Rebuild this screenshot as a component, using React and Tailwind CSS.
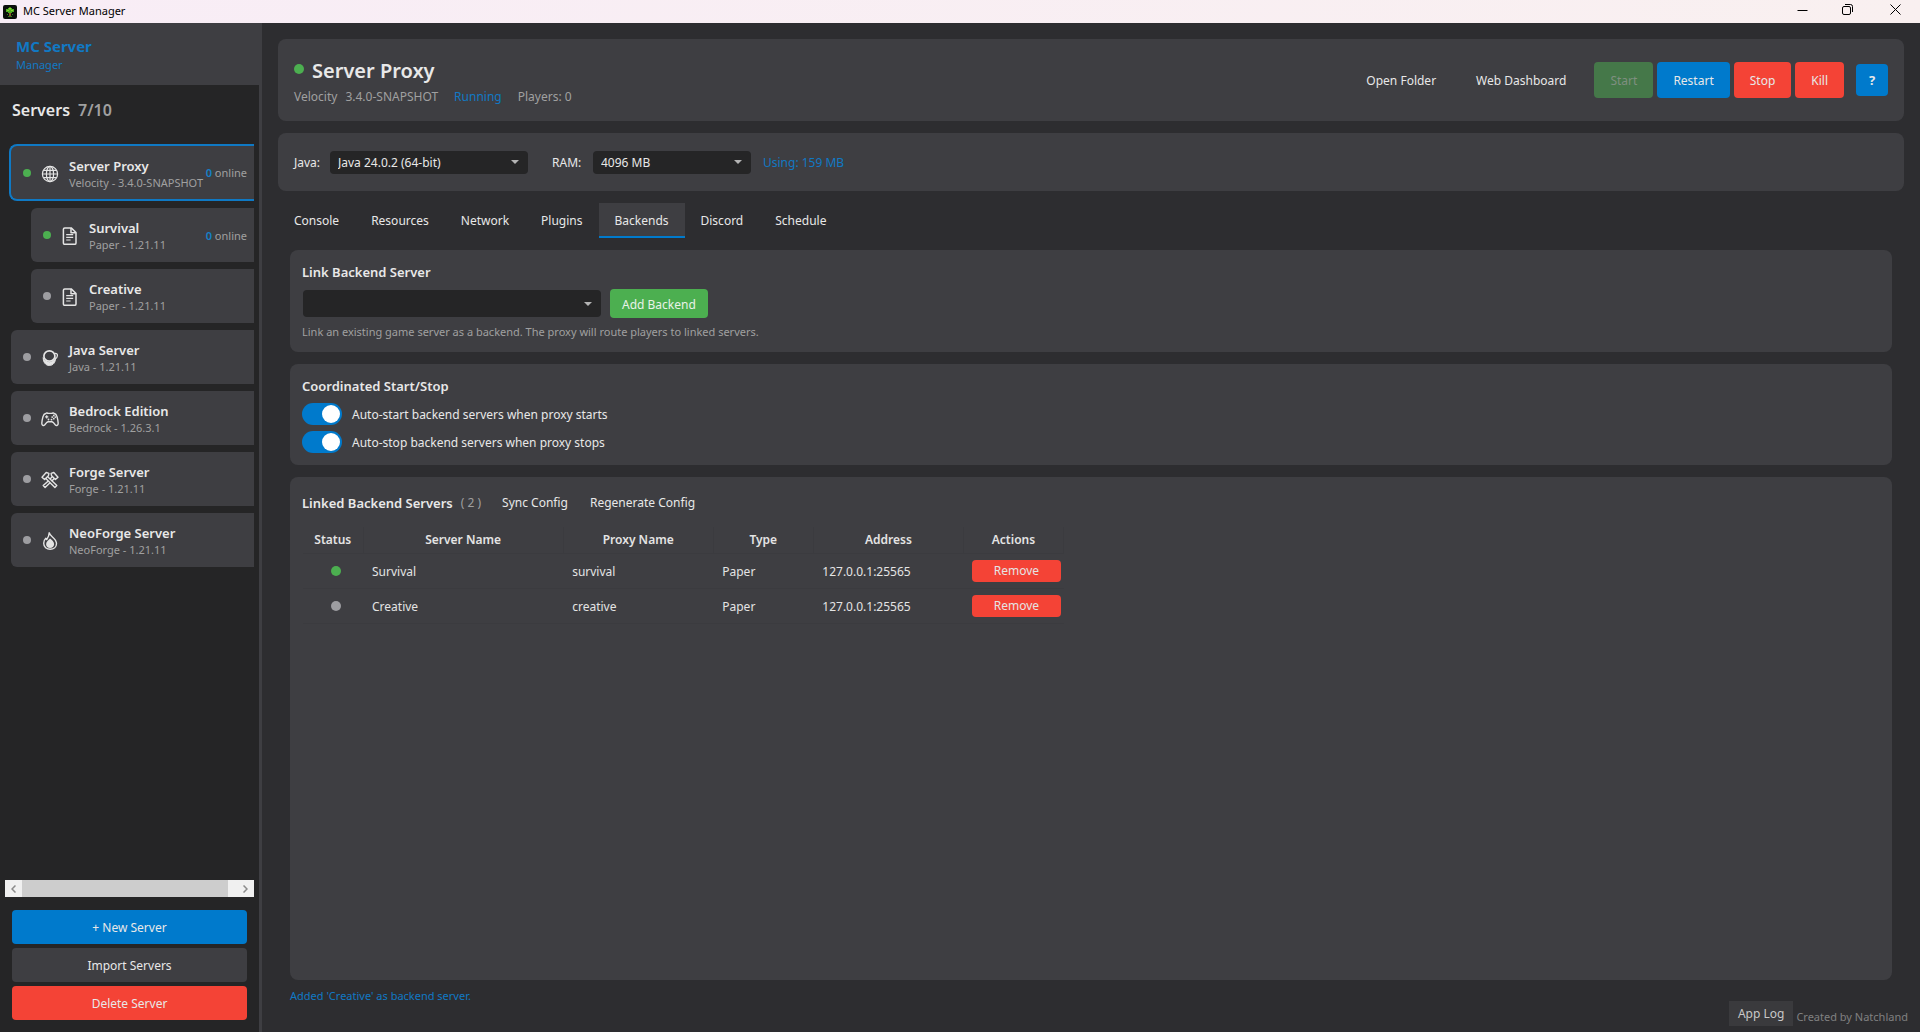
import { useState } from "react";

const GlobeIcon = () => (
  <svg viewBox="0 0 18 18" className="size-[18px] shrink-0" fill="none" stroke="currentColor" strokeWidth="1.2">
    <circle cx="9" cy="9" r="7.6" />
    <ellipse cx="9" cy="9" rx="3.6" ry="7.6" />
    <path d="M9 1.4v15.2M1.4 9h15.2M2.4 5.3h13.2M2.4 12.7h13.2" />
  </svg>
);

const PageIcon = () => (
  <svg viewBox="0 0 18 18" className="size-[18px] shrink-0" fill="none" stroke="currentColor" strokeWidth="1.5" strokeLinejoin="round">
    <path d="M3.8.9h6.4l4.8 4.6v10.4a1.4 1.4 0 0 1-1.4 1.4H3.8a1.4 1.4 0 0 1-1.4-1.4V2.3A1.4 1.4 0 0 1 3.8.9z" />
    <path d="M10 1v4.7h4.8" />
    <path d="M5.2 7.6h7M5.2 10.3h7M5.2 13h4.4" strokeWidth="1.2" />
  </svg>
);

const CupIcon = () => (
  <svg viewBox="0 0 18 18" className="size-[18px] shrink-0" fill="none" stroke="currentColor">
    <path d="M2.2 8.6c0 4.900 2.600 7.900 6.200 7.900s6.200-3 6.200-7.900c-1 2.900-3.200 4.600-6.200 4.600S3.200 11.500 2.200 8.600z" fill="currentColor" strokeWidth="1" />
    <ellipse cx="8.400" cy="7" rx="5.500" ry="5.200" strokeWidth="1.700" />
    <path d="M13.6 4.600c1.800-.6 3 .3 2.800 2.200-.2 1.700-1.200 3-2.600 3.600" strokeWidth="1.300" />
  </svg>
);

const GamepadIcon = () => (
  <svg viewBox="0 0 18 18" className="size-[18px] shrink-0" fill="none" stroke="currentColor" strokeWidth="1.4" strokeLinejoin="round">
    <path d="M5.200 3.200c1-.5 1.600.2 2.200.2h3.200c.6 0 1.200-.7 2.200-.2 1.900.5 2.700 1.300 3.200 3.400.7 2.500 1.200 4.700 1.200 6.700 0 2.300-1.700 2.900-3 1.500l-2-2.400c-.4-.4-.8-.6-1.400-.6H7.200c-.6 0-1 .2-1.400.6l-2 2.400c-1.300 1.400-3 .8-3-1.500 0-2 .5-4.200 1.200-6.700.5-2.100 1.300-2.900 3.200-3.400z" />
    <path d="M5.700 5.300v3.200M4.100 6.900h3.200" strokeWidth="1.200" />
    <g fill="currentColor" stroke="none">
      <circle cx="12.800" cy="5.500" r=".9" />
      <circle cx="11.200" cy="7.100" r=".9" />
      <circle cx="14.300" cy="7.100" r=".9" />
      <circle cx="12.800" cy="8.700" r=".9" />
      <circle cx="7.500" cy="9.500" r=".9" />
      <circle cx="10.500" cy="9.700" r=".9" />
    </g>
  </svg>
);

const HammersIcon = () => (
  <svg viewBox="0 0 18 18" className="size-[18px] shrink-0" fill="none" stroke="currentColor" strokeWidth="1.400" strokeLinejoin="round">
    <path d="M1 6.200 5.200 1.500 7.900 2.300 7.400 4.800 3.600 8.600z" />
    <path d="M17 6.200 12.800 1.500 10.100 2.300 10.600 4.800 14.400 8.600z" />
    <path d="M6.700 5.800 15.800 14.600 13.900 16.500 4.800 7.600" />
    <path d="M11.300 5.800 9 8M7.300 9.900 2.200 14.600l1.900 1.900L9 11.800M10.700 10.200l2.500-2.600" />
  </svg>
);

const FlameIcon = () => (
  <svg viewBox="0 0 18 18" className="size-[18px] shrink-0" fill="none" stroke="currentColor" strokeWidth="1.400" strokeLinejoin="round">
    <path d="M8.200.8c.6 1.800 1.600 2.700 3 3.900 2.300 2 4.300 3.900 4.300 6.900 0 3.500-2.800 5.700-6.300 5.700s-6.500-2.300-6.500-6c0-2.200.9-3.900 2.100-5l.9 1.300C6.900 5.700 8.300 3.500 8.200.8z" />
    <path d="M9.100 6.500c2 1.700 4 3.400 4 5.700s-1.700 3.800-4 3.800-4-1.500-4-3.800 2.400-4 4-5.700z" fill="currentColor" stroke="none" />
  </svg>
);

const AppLogo = () => (
  <svg viewBox="0 0 14 14" className="size-[14px]">
    <rect width="14" height="14" rx="2" fill="#0b0f0b" />
    <path d="M5 3h4v1h2v3H9v1H5V7H3V4h2z" fill="#4fae22" />
    <path d="M6 2.500h2v2H6zM4 5h2v1H4zM8 5h2v1H8z" fill="#8ad62f" />
    <path d="M6 8h2v3H6z" fill="#8a5a2b" />
    <path d="M4 9h1v1H4zM9 9h1v1H9zM5 11h4v1H5z" fill="#3c7a1c" />
  </svg>
);

const servers = [
  { name: "Server Proxy", detail: "Velocity - 3.4.0-SNAPSHOT", Icon: GlobeIcon, running: true, selected: true },
  { name: "Survival", detail: "Paper - 1.21.11", Icon: PageIcon, running: true, child: true },
  { name: "Creative", detail: "Paper - 1.21.11", Icon: PageIcon, child: true },
  { name: "Java Server", detail: "Java - 1.21.11", Icon: CupIcon },
  { name: "Bedrock Edition", detail: "Bedrock - 1.26.3.1", Icon: GamepadIcon },
  { name: "Forge Server", detail: "Forge - 1.21.11", Icon: HammersIcon },
  { name: "NeoForge Server", detail: "NeoForge - 1.21.11", Icon: FlameIcon },
];

const backends = [
  { name: "Survival", proxy: "survival", type: "Paper", address: "127.0.0.1:25565", running: true },
  { name: "Creative", proxy: "creative", type: "Paper", address: "127.0.0.1:25565", running: false },
];

const columns = [
  ["Status", "w-[60px]"],
  ["Server Name", "w-[200px]"],
  ["Proxy Name", "w-[150px]"],
  ["Type", "w-[100px]"],
  ["Address", "w-[150px]"],
  ["Actions", "w-[100px]"],
];

const tabs = ["Console", "Resources", "Network", "Plugins", "Backends", "Discord", "Schedule"];

function TitleBar() {
  return (
    <header className="flex h-[23px] shrink-0 items-center bg-linear-to-r from-[#f8edf6] to-[#f9f0f0] pl-[3px] text-black">
      <AppLogo />
      <span className="ml-1.5 text-[11px]">MC Server Manager</span>
      <div className="ml-auto flex h-full">
        <button aria-label="Minimize" className="grid w-[45px] place-items-center pb-1">
          <svg viewBox="0 0 11 11" className="size-[11px]" stroke="currentColor"><path d="M.5 6.500h10" /></svg>
        </button>
        <button aria-label="Restore" className="grid w-[45px] place-items-center pb-1">
          <svg viewBox="0 0 11 11" className="size-[11px]" fill="none" stroke="currentColor">
            <rect x=".5" y="2.500" width="8" height="8" rx="1.500" />
            <path d="M3 .5h5.500a2 2 0 0 1 2 2V8" />
          </svg>
        </button>
        <button aria-label="Close" className="grid w-[50px] place-items-center pb-1">
          <svg viewBox="0 0 11 11" className="size-[11px]" stroke="currentColor"><path d="m.5.5 10 10M10.500.5l-10 10" /></svg>
        </button>
      </div>
    </header>
  );
}

function Dot({ running, size }) {
  return <span className={`${size} shrink-0 rounded-full ${running ? "bg-[#4caf50]" : "bg-[#9d9da1]"}`} />;
}

function ServerItem({ name, detail, Icon, running, selected, child }) {
  const frame = selected
    ? "h-[57px] rounded-l-lg border-2 border-r-0 border-[#0f79c4]"
    : child
      ? "ml-[22px] h-[54px] rounded-l-md"
      : "ml-0.5 h-[54px] rounded-l-md";
  return (
    <li>
      <button className={`${frame} flex w-full items-center bg-[#3e3e42] pr-[7px] pl-3 text-left ${child ? "max-w-[223px]" : ""}`}>
        <Dot running={running} size="size-2" />
        <span className="mt-0.5 ml-2.5 text-[#e4e4e4]"><Icon /></span>
        <span className={`ml-2.5 flex flex-col whitespace-nowrap ${selected ? "pt-1" : "pt-0.5"}`}>
          <span className="text-[13px] leading-[17px] font-semibold text-[#e8e8e8]">{name}</span>
          <span className="text-[11px] leading-4 text-[#a0a0a0]">{detail}</span>
        </span>
        {running && (
          <span className="ml-auto pt-0.5 text-[11px] whitespace-nowrap text-[#a0a0a0]">
            <b className="font-semibold text-[#1480ca]">0</b> online
          </span>
        )}
      </button>
    </li>
  );
}

function Sidebar() {
  return (
    <aside className="flex w-[262px] shrink-0 flex-col border-r-3 border-[#3e3e42] bg-[#252526]">
      <div className="flex h-[62px] flex-col justify-center bg-[#3e3e42] px-4 pt-0.5 text-[#1179c4]">
        <h1 className="text-[15px] leading-5 font-bold">MC Server</h1>
        <p className="text-[11px] leading-[18px]">Manager</p>
      </div>
      <h2 className="flex h-[58px] items-center gap-2 pb-2 pl-3 text-[16px] font-semibold text-[#e8e8e8]">
        Servers <span className="text-[#a0a0a0]">7/10</span>
      </h2>
      <ul className="mt-px mr-[5px] ml-[9px] flex flex-1 flex-col gap-[7px] overflow-hidden">
        {servers.map((s) => <ServerItem key={s.name} {...s} />)}
      </ul>
      <div className="mr-[5px] ml-[5px] flex h-[17px] bg-[#f0f0f0] text-[#8a8a8a]">
        <button aria-label="Scroll left" className="grid w-[17px] place-items-center">
          <svg viewBox="0 0 5 8" className="h-2 w-[5px]" fill="none" stroke="currentColor" strokeWidth="1.500"><path d="M4.500.5 1 4l3.500 3.500" /></svg>
        </button>
        <div className="flex-1 bg-[#cdcdcd]" />
        <button aria-label="Scroll right" className="flex w-[26px] items-center justify-end pr-1.5">
          <svg viewBox="0 0 5 8" className="h-2 w-[5px]" fill="none" stroke="currentColor" strokeWidth="1.500"><path d="M.5.5 4 4 .5 7.500" /></svg>
        </button>
      </div>
      <div className="flex flex-col gap-1 px-3 pt-[13px] pb-3 text-[12px] text-[#e8e8e8]">
        <button className="h-[34px] rounded bg-[#007acc] pt-0.5">+ New Server</button>
        <button className="h-[34px] rounded bg-[#3e3e42] pt-0.5">Import Servers</button>
        <button className="h-[34px] rounded bg-[#f44336] pt-0.5">Delete Server</button>
      </div>
    </aside>
  );
}

function Select({ id, options, className, label }) {
  return (
    <div className={`relative ${className}`}>
      <select id={id} aria-label={label} className="size-full appearance-none rounded bg-[#252526] pt-px pr-6 pl-2 text-[12px] text-[#e8e8e8]">
        {options.map((o) => <option key={o}>{o}</option>)}
      </select>
      <svg viewBox="0 0 8 4" className="pointer-events-none absolute top-1/2 right-[9px] h-1 w-2 -translate-y-1/2" fill="#b4b4b4"><path d="M0 0h8L4 4z" /></svg>
    </div>
  );
}

function ServerHeader() {
  const base = "h-9 rounded px-4 pt-0.5";
  return (
    <section className="flex min-h-[82px] items-center rounded-lg bg-[#3e3e42] px-4">
      <div className="pt-[7px]">
        <div className="flex items-center gap-2">
          <span className="flex pb-1"><Dot running size="size-2.5" /></span>
          <h2 className="text-[20px] leading-[26px] font-semibold text-[#e8e8e8]">Server Proxy</h2>
        </div>
        <p className="flex text-[12px] leading-[26px] text-[#a0a0a0]">
          <span>Velocity</span>
          <span className="ml-2">3.4.0-SNAPSHOT</span>
          <span className="ml-4 text-[#1179c4]">Running</span>
          <span className="ml-4">Players: 0</span>
        </p>
      </div>
      <div className="ml-auto flex items-center gap-1 text-[12px] text-[#e8e8e8]">
        <button className={`${base} mr-1`}>Open Folder</button>
        <button className={`${base} mr-2`}>Web Dashboard</button>
        <button disabled className={`${base} bg-[#457849] text-[#7f8f80]`}>Start</button>
        <button className={`${base} bg-[#007acc]`}>Restart</button>
        <button className={`${base} bg-[#f44336]`}>Stop</button>
        <button className={`${base} bg-[#f44336]`}>Kill</button>
        <button aria-label="Help" className="ml-2 size-8 rounded bg-[#007acc] pt-0.5 text-[13px] font-bold">?</button>
      </div>
    </section>
  );
}

function Toggle({ label }) {
  const [on, setOn] = useState(true);
  return (
    <label className="flex h-[22px] items-center gap-2.5 text-[12px] text-[#e8e8e8]">
      <input
        type="checkbox"
        role="switch"
        checked={on}
        onChange={() => setOn(!on)}
        className="flex h-[22px] w-10 appearance-none items-center rounded-full bg-[#5a5a5e] px-0.5 before:size-[18px] before:rounded-full before:bg-white checked:justify-end checked:bg-[#007acc]"
      />
      <span className="pt-0.5">{label}</span>
    </label>
  );
}

function BackendTable() {
  return (
    <table className="mt-2.5 ml-px w-[761px] table-fixed border-collapse text-[12px] text-[#e4e4e4]">
      <thead>
        <tr className="h-[26px]">
          {columns.map(([title, width]) => (
            <th key={title} className={`${width} border-r border-b border-[#3b3b3f] font-semibold`}>{title}</th>
          ))}
        </tr>
      </thead>
      <tbody>
        {backends.map((b) => (
          <tr key={b.name} className="h-[35px] border-b border-[#3b3b3f]">
            <td className="pl-1.5"><span className="flex justify-center"><Dot running={b.running} size="size-2.5" /></span></td>
            <td className="pt-0.5 pl-[9px]">{b.name}</td>
            <td className="pt-0.5 pl-[9px]">{b.proxy}</td>
            <td className="pt-0.5 pl-[9px]">{b.type}</td>
            <td className="pt-0.5 pl-[9px]">{b.address}</td>
            <td className="pr-[3px] pl-[9px]">
              <button className="block h-[22px] w-full rounded bg-[#f44336] pt-px">Remove</button>
            </td>
          </tr>
        ))}
      </tbody>
    </table>
  );
}

export default function App() {
  const [tab, setTab] = useState("Backends");
  const heading = "text-[13px] leading-5 font-semibold text-[#e8e8e8]";
  return (
    <div className="flex h-screen flex-col bg-[#2d2d30] font-['Noto_Sans','Open_Sans',sans-serif]">
      <TitleBar />
      <div className="flex min-h-0 flex-1">
        <Sidebar />
        <main className="flex min-w-0 flex-1 flex-col pt-4">
          <div className="flex flex-1 flex-col gap-3 px-4">
            <ServerHeader />
            <section className="flex min-h-[58px] items-center rounded-lg bg-[#3e3e42] px-4 text-[12px] text-[#e8e8e8]">
              <label htmlFor="java" className="mr-2 w-7 pt-px">Java:</label>
              <Select id="java" options={["Java 24.0.2 (64-bit)"]} className="h-[23px] w-[198px]" />
              <label htmlFor="ram" className="mr-2 ml-6 w-[33px] pt-px">RAM:</label>
              <Select id="ram" options={["4096 MB"]} className="h-[23px] w-[158px]" />
              <span className="ml-3 pt-px text-[#1179c4]">Using: 159 MB</span>
            </section>

            <div role="tablist" className="flex h-[35px] text-[12px] text-[#e8e8e8]">
              {tabs.map((t) => (
                <button
                  key={t}
                  role="tab"
                  aria-selected={t === tab}
                  onClick={() => setTab(t)}
                  className={`border-b-2 px-4 pt-0.5 ${t === tab ? "border-[#007acc] bg-[#3e3e42]" : "border-transparent"}`}
                >
                  {t}
                </button>
              ))}
            </div>

            <div className="mx-3 flex flex-1 flex-col gap-3">
              <section className="rounded-lg bg-[#3e3e42] p-3">
                <h3 className={heading}>Link Backend Server</h3>
                <div className="mt-[7px] ml-px flex items-center gap-[9px]">
                  <Select label="Backend server" options={[""]} className="h-[27px] w-[298px]" />
                  <button className="h-[29px] rounded bg-[#4caf50] px-3 pt-0.5 text-[12px] text-[#e8f2e8]">Add Backend</button>
                </div>
                <p className="mt-1.5 text-[11px] leading-4 text-[#a0a0a0]">
                  Link an existing game server as a backend. The proxy will route players to linked servers.
                </p>
              </section>

              <section className="rounded-lg bg-[#3e3e42] p-3">
                <h3 className={heading}>Coordinated Start/Stop</h3>
                <div className="mt-[7px] flex flex-col gap-1.5">
                  <Toggle label="Auto-start backend servers when proxy starts" />
                  <Toggle label="Auto-stop backend servers when proxy stops" />
                </div>
              </section>

              <section className="flex-1 rounded-lg bg-[#3e3e42] p-3">
                <div className="flex h-7 items-center text-[12px] text-[#e8e8e8]">
                  <h3 className={heading}>Linked Backend Servers</h3>
                  <span className="ml-2 text-[#a0a0a0]">( 2 )</span>
                  <button className="ml-2.5 h-7 px-[11px]">Sync Config</button>
                  <button className="h-7 px-[11px]">Regenerate Config</button>
                </div>
                <BackendTable />
              </section>
            </div>
          </div>

          <footer className="flex h-[52px] shrink-0 justify-between pr-3 pl-7">
            <p role="status" className="pt-2 text-[11px] text-[#1179c4]">Added 'Creative' as backend server.</p>
            <div className="flex items-end gap-[3px] pb-1.5">
              <button className="h-[25px] bg-[#3a3a3d] px-[9px] text-[12px] text-[#c8c8c8]">App Log</button>
              <span className="text-[11px] leading-[18px] text-[#808080]">Created by Natchland</span>
            </div>
          </footer>
        </main>
      </div>
    </div>
  );
}
